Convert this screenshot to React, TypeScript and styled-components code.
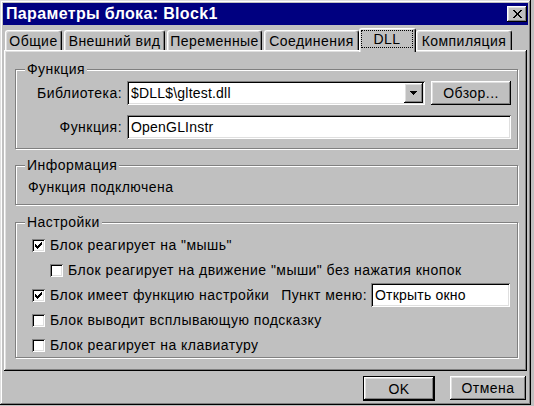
import React from 'react'
import styled, { createGlobalStyle } from 'styled-components'

const GlobalStyle = createGlobalStyle`
  html, body {
    margin: 0;
    padding: 0;
    background: #c0c0c0;
  }
  body {
    font-family: "Liberation Sans", Arial, sans-serif;
    font-size: 14px;
    letter-spacing: 0.45px;
    color: #000;
  }
`

const raised = `
  box-shadow: inset -1px -1px #000, inset 1px 1px #fff,
    inset -2px -2px #808080, inset 2px 2px #dfdfdf;
`
const sunken = `
  box-shadow: inset 1px 1px #808080, inset -1px -1px #fff,
    inset 2px 2px #000, inset -2px -2px #dfdfdf;
`

const Window = styled.div`
  width: 531px;
  height: 405px;
  box-sizing: border-box;
  padding: 3px;
  background: #c0c0c0;
  box-shadow: inset -1px -1px #000, inset 1px 1px #dfdfdf,
    inset -2px -2px #808080, inset 2px 2px #fff;
  display: flex;
  flex-direction: column;
`

const TitleBar = styled.div`
  height: 22px;
  background: #000080;
  color: #fff;
  display: flex;
  align-items: center;
  justify-content: space-between;
  padding: 0 1px 0 3px;
`

const TitleText = styled.span`
  font-weight: bold;
  font-size: 16px;
  letter-spacing: 0.35px;
`

const CloseButton = styled.div`
  width: 20px;
  height: 16px;
  background: #c0c0c0;
  ${raised}
  display: flex;
  align-items: center;
  justify-content: center;
`

const Body = styled.div`
  padding: 3px 1px 0 1px;
  display: flex;
  flex-direction: column;
`

const TabStrip = styled.div`
  height: 22px;
  display: flex;
  align-items: flex-end;
  gap: 2px;
  padding-left: 1px;
`

const Tab = styled.div<{ $w: number; $active?: boolean }>`
  position: relative;
  box-sizing: border-box;
  width: ${p => p.$w + (p.$active ? 4 : 0)}px;
  height: ${p => (p.$active ? 24 : 20)}px;
  margin: ${p => (p.$active ? '0 -2px -2px -2px' : '0')};
  z-index: ${p => (p.$active ? 1 : 0)};
  background: #c0c0c0;
  border: 1px solid;
  border-color: #fff #000 transparent #fff;
  border-bottom: none;
  border-radius: 3px 3px 0 0;
  box-shadow: inset -1px 0 #808080, inset 1px 1px #dfdfdf;
  display: flex;
  align-items: ${p => (p.$active ? 'stretch' : 'center')};
  justify-content: center;
  padding: ${p => (p.$active ? '1px 2px 4px 1px' : '0')};
  line-height: 16px;
  white-space: nowrap;
`

const FocusRect = styled.div`
  flex: 1;
  border: 1px dotted #000;
  display: flex;
  align-items: center;
  justify-content: center;
`

const Panel = styled.div`
  height: 321px;
  box-sizing: border-box;
  background: #c0c0c0;
  ${raised}
  padding: 19px 9px 0 11px;
  display: flex;
  flex-direction: column;
`

const Group = styled.div<{ $h: number; $mt?: number }>`
  position: relative;
  box-sizing: border-box;
  height: ${p => p.$h}px;
  margin-top: ${p => p.$mt || 0}px;
  border: 1px solid #808080;
  box-shadow: inset 1px 1px #fff, 1px 1px #fff;
`

const Legend = styled.span`
  position: absolute;
  top: -9px;
  left: 9px;
  padding: 0 2px 0 2px;
  background: #c0c0c0;
  line-height: 16px;
`

const FieldGrid = styled.div`
  display: grid;
  grid-template-columns: 106px 1fr;
  column-gap: 5px;
  row-gap: 10px;
  padding: 11px 6px 0 0;
  align-items: center;
`

const FieldLabel = styled.span`
  text-align: right;
  white-space: nowrap;
`

const FieldRow = styled.div`
  display: flex;
  gap: 6px;
`

const TextBox = styled.div<{ $w?: number }>`
  box-sizing: border-box;
  height: 24px;
  ${p => (p.$w ? `width: ${p.$w}px; flex: none;` : 'flex: 1;')}
  background: #fff;
  ${sunken}
  padding: 2px 2px 2px 4px;
  display: flex;
  align-items: center;
  white-space: nowrap;
  letter-spacing: 0.2px;
`

const ComboText = styled.span`
  flex: 1;
`

const DropButton = styled.div`
  width: 19px;
  height: 20px;
  background: #c0c0c0;
  ${raised}
  display: flex;
  align-items: center;
  justify-content: center;
`

const Button = styled.div<{ $w: number; $default?: boolean }>`
  box-sizing: border-box;
  width: ${p => p.$w}px;
  height: ${p => (p.$default ? 25 : 24)}px;
  background: #c0c0c0;
  ${raised}
  ${p => (p.$default ? 'border: 1px solid #000;' : '')}
  display: flex;
  align-items: center;
  justify-content: center;
`

const InfoText = styled.div`
  padding: 13px 0 0 12px;
  line-height: 16px;
`

const CheckList = styled.div`
  display: flex;
  flex-direction: column;
  gap: 1px;
  padding: 10px 7px 0 16px;
`

const CheckRow = styled.div<{ $indent?: boolean }>`
  height: 24px;
  display: flex;
  align-items: center;
  padding-left: ${p => (p.$indent ? 18 : 0)}px;
  white-space: nowrap;
`

const Box = styled.div`
  width: 13px;
  height: 13px;
  box-sizing: border-box;
  background: #fff;
  ${sunken}
  margin-right: 5px;
  flex: none;
  position: relative;
`

const MenuLabel = styled.span`
  margin-left: auto;
  margin-right: 4px;
`

const Footer = styled.div`
  display: flex;
  justify-content: flex-end;
  gap: 15px;
  padding: 5px 1px 0 0;
`

const CheckMark = () => (
  <svg width="13" height="13" viewBox="0 0 13 13" shapeRendering="crispEdges" style={{ position: 'absolute', left: 0, top: 0 }}>
    <path
      fill="#000"
      d="M3 5h1v3H3zM4 6h1v3H4zM5 7h1v3H5zM6 6h1v3H6zM7 5h1v3H7zM8 4h1v3H8zM9 3h1v3H9z"
    />
  </svg>
)

const Check = ({ checked }: { checked?: boolean }) => <Box>{checked && <CheckMark />}</Box>

const tabs = [
  { label: 'Общие', w: 57 },
  { label: 'Внешний вид', w: 101 },
  { label: 'Переменные', w: 95 },
  { label: 'Соединения', w: 95 },
  { label: 'DLL', w: 53, active: true },
  { label: 'Компиляция', w: 96 },
]

export default function App() {
  return (
    <>
      <GlobalStyle />
      <Window>
        <TitleBar>
          <TitleText>Параметры блока: Block1</TitleText>
          <CloseButton>
            <svg width="9" height="8" viewBox="0 0 9 8" shapeRendering="crispEdges">
              <path
                fill="#000"
                d="M0 0h2v1H0zM7 0h2v1H7zM1 1h2v1H1zM6 1h2v1H6zM2 2h2v1H2zM5 2h2v1H5zM3 3h3v2H3zM2 5h2v1H2zM5 5h2v1H5zM1 6h2v1H1zM6 6h2v1H6zM0 7h2v1H0zM7 7h2v1H7z"
              />
            </svg>
          </CloseButton>
        </TitleBar>
        <Body>
          <TabStrip>
            {tabs.map(t => (
              <Tab key={t.label} $w={t.w} $active={t.active}>
                {t.active ? <FocusRect>{t.label}</FocusRect> : t.label}
              </Tab>
            ))}
          </TabStrip>
          <Panel>
            <Group $h={80}>
              <Legend>Функция</Legend>
              <FieldGrid>
                <FieldLabel>Библиотека:</FieldLabel>
                <FieldRow>
                  <TextBox>
                    <ComboText>$DLL$\gltest.dll</ComboText>
                    <DropButton>
                      <svg width="7" height="4" viewBox="0 0 7 4" shapeRendering="crispEdges">
                        <path fill="#000" d="M0 0h7v1H0zM1 1h5v1H1zM2 2h3v1H2zM3 3h1v1H3z" />
                      </svg>
                    </DropButton>
                  </TextBox>
                  <Button $w={80}>Обзор...</Button>
                </FieldRow>
                <FieldLabel>Функция:</FieldLabel>
                <TextBox>OpenGLInstr</TextBox>
              </FieldGrid>
            </Group>
            <Group $h={40} $mt={16}>
              <Legend>Информация</Legend>
              <InfoText>Функция подключена</InfoText>
            </Group>
            <Group $h={136} $mt={17}>
              <Legend>Настройки</Legend>
              <CheckList>
                <CheckRow>
                  <Check checked />
                  Блок реагирует на "мышь"
                </CheckRow>
                <CheckRow $indent>
                  <Check />
                  Блок реагирует на движение "мыши" без нажатия кнопок
                </CheckRow>
                <CheckRow>
                  <Check checked />
                  Блок имеет функцию настройки
                  <MenuLabel>Пункт меню:</MenuLabel>
                  <TextBox $w={139}>Открыть окно</TextBox>
                </CheckRow>
                <CheckRow>
                  <Check />
                  Блок выводит всплывающую подсказку
                </CheckRow>
                <CheckRow>
                  <Check />
                  Блок реагирует на клавиатуру
                </CheckRow>
              </CheckList>
            </Group>
          </Panel>
          <Footer>
            <Button $w={72} $default>OK</Button>
            <Button $w={76}>Отмена</Button>
          </Footer>
        </Body>
      </Window>
    </>
  )
}
